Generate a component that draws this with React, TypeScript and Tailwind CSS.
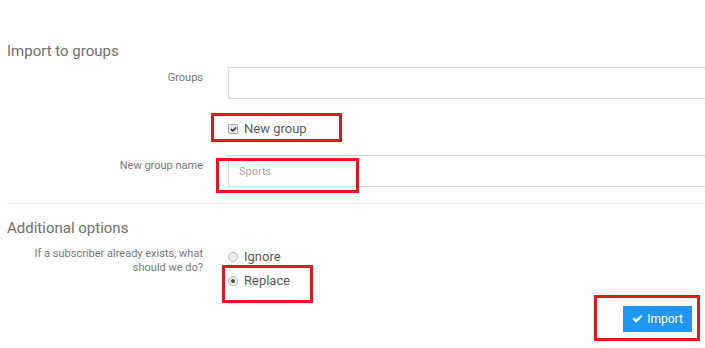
import { useState } from "react";

function Check({ className }: { className?: string }) {
  return (
    <svg viewBox="0 0 12 10" className={className} fill="currentColor">
      <path d="M0.6 5.2 2.4 3.4 4.6 5.6 9.6 0.6 11.4 2.4 4.6 9.2Z" />
    </svg>
  );
}

function Field({ label, children }: { label: string; children: React.ReactNode }) {
  return (
    <div className="flex">
      <div className="w-[196px] shrink-0 pt-[4px] text-right text-[11px] leading-[14px] text-[#777]">
        {label}
      </div>
      <div className="ml-[25px] shrink-0">{children}</div>
    </div>
  );
}

function Radio({ checked, label, onClick }: { checked: boolean; label: string; onClick: () => void }) {
  return (
    <div className="flex h-[20px] items-center cursor-pointer" onClick={onClick}>
      <span className="flex h-[10px] w-[10px] items-center justify-center rounded-full border border-[#b5b5b5] bg-[#eee]">
        {checked && <span className="h-[4px] w-[4px] rounded-full bg-[#444]" />}
      </span>
      <span className="ml-[6px] text-[13px] text-[#5a5a5a]">{label}</span>
    </div>
  );
}

export default function App() {
  const [newGroup, setNewGroup] = useState(true);
  const [mode, setMode] = useState("replace");

  return (
    <div className="relative h-[348px] w-[705px] overflow-hidden bg-white font-['Roboto',sans-serif]">
      <div className="pl-[7px] pt-[40px]">
        <h3 className="h-[20px] pt-[1px] text-[15px] leading-[20px] text-[#6e6e6e]">Import to groups</h3>

        <div className="mt-[7px]">
          <Field label="Groups">
            <input className="h-[32px] w-[490px] border border-[#d9d9e3] bg-white outline-none" />
          </Field>
        </div>

        <div className="mt-[20px] flex h-[20px] items-center pl-[221px]">
          <span
            className="flex h-[10px] w-[10px] cursor-pointer items-center justify-center rounded-[1px] border border-[#a9a9a9] bg-[#e6e6e6]"
            onClick={() => setNewGroup(!newGroup)}
          >
            {newGroup && <Check className="h-[7px] w-[7px] text-[#333]" />}
          </span>
          <span className="ml-[6px] text-[13px] text-[#5a5a5a]">New group</span>
        </div>

        <div className="mt-[16px]">
          <Field label="New group name">
            <input
              placeholder="Sports"
              className="h-[32px] w-[490px] border border-[#d9d9e3] bg-white px-[10px] text-[11px] text-[#555] outline-none placeholder:text-[#aaa]"
            />
          </Field>
        </div>

        <div className="mt-[16px] border-t border-[#eee]" />

        <h3 className="mt-[13px] h-[20px] pt-[1px] text-[15px] leading-[20px] text-[#6e6e6e]">Additional options</h3>

        <div className="mt-[10px] flex">
          <div className="w-[196px] shrink-0 text-right text-[11px] leading-[14px] text-[#777]">
            If a subscriber already exists, what should we do?
          </div>
          <div className="ml-[25px]">
            <Radio checked={mode === "ignore"} label="Ignore" onClick={() => setMode("ignore")} />
            <div className="mt-[4px]">
              <Radio checked={mode === "replace"} label="Replace" onClick={() => setMode("replace")} />
            </div>
          </div>
        </div>

        <div className="mt-[15px] flex justify-end pr-[13px]">
          <button className="flex h-[26px] w-[69px] items-center justify-center gap-[4px] bg-[#2196f3] text-[12px] text-white">
            <Check className="h-[10px] w-[11px]" />
            Import
          </button>
        </div>
      </div>

      <div className="absolute left-[211px] top-[113px] h-[29px] w-[131px] border-[3px] border-[#e3171f]" />
      <div className="absolute left-[216px] top-[158px] h-[35px] w-[143px] border-[3px] border-[#e3171f]" />
      <div className="absolute left-[222px] top-[265px] h-[38px] w-[91px] border-[3px] border-[#e3171f]" />
      <div className="absolute left-[594px] top-[295px] h-[46px] w-[106px] border-[3px] border-[#e3171f]" />
    </div>
  );
}
